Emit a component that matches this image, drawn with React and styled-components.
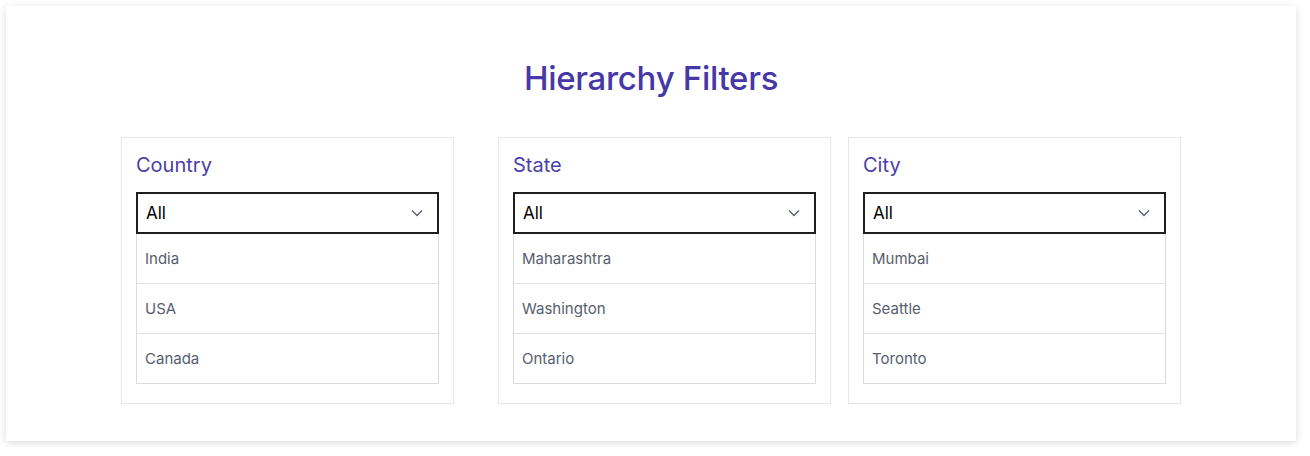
import styled, { createGlobalStyle } from "styled-components";

const GlobalStyle = createGlobalStyle`
  body {
    margin: 0;
    padding: 6px;
    background: #ffffff;
    font-family: Inter, "Noto Sans", sans-serif;
  }
`;

const filters = [
  { label: "Country", options: ["India", "USA", "Canada"], gap: 44 },
  { label: "State", options: ["Maharashtra", "Washington", "Ontario"], gap: 17 },
  { label: "City", options: ["Mumbai", "Seattle", "Toronto"], gap: 0 },
];

const Chevron = () => (
  <svg width="12" height="8" viewBox="0 0 12 8" fill="none">
    <path d="M1 1.5L6 6.5L11 1.5" stroke="#5b6070" strokeWidth="1.4" />
  </svg>
);

const App = () => {
  return (
    <>
      <GlobalStyle />
      <Card>
        <Title>Hierarchy Filters</Title>
        <Row>
          {filters.map((f) => (
            <Panel key={f.label} $gap={f.gap}>
              <Label>{f.label}</Label>
              <Select>
                <span>All</span>
                <Chevron />
              </Select>
              <OptionList>
                {f.options.map((o) => (
                  <Option key={o}>{o}</Option>
                ))}
              </OptionList>
            </Panel>
          ))}
        </Row>
      </Card>
    </>
  );
};

const Card = styled.div`
  width: 1290px;
  height: 435px;
  box-sizing: border-box;
  padding-top: 52px;
  background: #ffffff;
  box-shadow: 0 2px 8px rgba(0, 0, 0, 0.14);
  display: flex;
  flex-direction: column;
  align-items: center;
`;

const Title = styled.h1`
  margin: 0 0 39px;
  font-size: 33px;
  line-height: 40px;
  font-weight: 500;
  color: #4738a8;
  letter-spacing: -0.3px;
`;

const Row = styled.div`
  display: flex;
  justify-content: center;
`;

const Panel = styled.div`
  width: 333px;
  box-sizing: border-box;
  border: 1px solid #e6e6e6;
  padding: 14px 14px 19px;
  margin-right: ${(p) => p.$gap}px;
`;

const Label = styled.div`
  font-size: 20px;
  line-height: 26px;
  color: #4a40a8;
  margin-bottom: 14px;
`;

const Select = styled.div`
  height: 42px;
  box-sizing: border-box;
  border: 2px solid #1f1f1f;
  display: flex;
  align-items: center;
  justify-content: space-between;
  padding: 0 14px 0 8px;
  font-size: 17px;
  color: #000;
`;

const OptionList = styled.div`
  border: 1px solid #dcdcdc;
  border-top: none;
`;

const Option = styled.div`
  height: 49px;
  display: flex;
  align-items: center;
  padding-left: 8px;
  font-size: 15px;
  color: #575e6e;
  & + & {
    border-top: 1px solid #e2e2e2;
  }
`;

export default App;
